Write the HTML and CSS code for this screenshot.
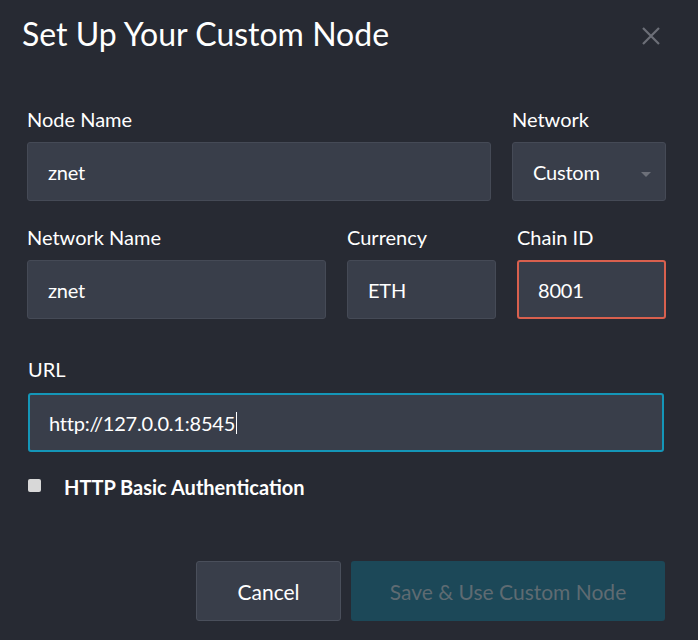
FILE: index.html
```html
<!DOCTYPE html>
<html lang="en">
<head>
<meta charset="utf-8">
<title>Set Up Your Custom Node</title>
<link rel="stylesheet" href="styles.css">
</head>
<body>
<div class="modal">
  <div class="header">
    <h1 class="title">Set Up Your Custom Node</h1>
    <button class="close" aria-label="Close">
      <svg width="20" height="20" viewBox="0 0 20 20"><path d="M2 2 L18 18 M18 2 L2 18" stroke="#6c6f78" stroke-width="2.2" fill="none"/></svg>
    </button>
  </div>
  <div class="row row1">
    <div class="field">
      <label class="label">Node Name</label>
      <div class="input">znet</div>
    </div>
    <div class="field">
      <label class="label">Network</label>
      <div class="input select">Custom<span class="caret"></span></div>
    </div>
  </div>
  <div class="row row2">
    <div class="field">
      <label class="label">Network Name</label>
      <div class="input">znet</div>
    </div>
    <div class="field">
      <label class="label">Currency</label>
      <div class="input">ETH</div>
    </div>
    <div class="field">
      <label class="label">Chain ID</label>
      <div class="input error">8001</div>
    </div>
  </div>
  <div class="field url">
    <label class="label">URL</label>
    <div class="input focus">http://127.0.0.1:8545<span class="cursor"></span></div>
  </div>
  <div class="check">
    <span class="box"></span>
    <span class="check-text">HTTP Basic Authentication</span>
  </div>
  <div class="actions">
    <button class="btn cancel">Cancel</button>
    <button class="btn save">Save &amp; Use Custom Node</button>
  </div>
</div>
</body>
</html>
```
FILE: styles.css
```css
html, body {
  margin: 0;
  padding: 0;
  background: #272a33;
}
body {
  font-family: Lato, "Open Sans", sans-serif;
  color: #ffffff;
  width: 698px;
  height: 640px;
  overflow: hidden;
}
.modal {
  padding: 0 32px 0 27px;
}
.header {
  display: flex;
  justify-content: space-between;
  align-items: flex-start;
  padding-top: 14px;
  margin-left: -5px;
}
.title {
  margin: 0;
  font-weight: 400;
  font-size: 32px;
  line-height: 40px;
  letter-spacing: 0;
  color: #ffffff;
}
.close {
  background: none;
  border: 0;
  padding: 0;
  margin: 12px 5px 0 0;
  width: 20px;
  height: 20px;
  display: block;
}
.close svg { display: block; }
.row {
  display: grid;
  column-gap: 21px;
}
.row1 {
  grid-template-columns: 464px 154px;
  margin-top: 54px;
}
.row2 {
  grid-template-columns: 299px 149px 149px;
  margin-top: 25px;
}
.field {
  display: flex;
  flex-direction: column;
}
.label {
  font-size: 20px;
  line-height: 22px;
  margin-bottom: 12px;
  letter-spacing: 0;
}
.input {
  box-sizing: border-box;
  height: 59px;
  background: #393e4a;
  border: 1px solid #454a56;
  border-radius: 3px;
  padding: 0 20px;
  display: flex;
  align-items: center;
  font-size: 20px;
  letter-spacing: -0.2px;
  color: #ffffff;
}
.select {
  position: relative;
}
.caret {
  position: absolute;
  right: 14px;
  top: 29px;
  width: 0;
  height: 0;
  border-left: 5px solid transparent;
  border-right: 5px solid transparent;
  border-top: 5px solid #6d7079;
}
.error {
  border: 2px solid #d9604e;
  padding-left: 19px;
}
.url {
  margin-top: 39px;
  margin-left: 1px;
  margin-right: 2px;
}
.url .label { margin-bottom: 13px; }
.focus {
  border: 2px solid #1496b8;
  height: 59px;
  padding-left: 19px;
}
.cursor {
  display: inline-block;
  width: 1px;
  height: 22px;
  background: #ffffff;
  margin-left: 1px;
}
.check {
  display: flex;
  align-items: center;
  margin-top: 24px;
  margin-left: 1px;
  height: 22px;
}
.box {
  width: 13px;
  height: 13px;
  background: #d8d8d8;
  border-radius: 2px;
  margin-right: 23px;
  margin-top: -3px;
}
.check-text {
  font-weight: 700;
  font-size: 20px;
  letter-spacing: 0;
}
.actions {
  display: flex;
  justify-content: flex-end;
  gap: 10px;
  margin-top: 63px;
  margin-right: 1px;
}
.btn {
  box-sizing: border-box;
  height: 60px;
  border-radius: 3px;
  font-family: Lato, "Open Sans", sans-serif;
  font-size: 21px;
  letter-spacing: 0;
  cursor: default;
}
.cancel {
  width: 145px;
  background: #393e4a;
  border: 1px solid #4a4f5b;
  color: #ffffff;
}
.save {
  width: 314px;
  background: #1c4858;
  border: 0;
  color: #5f6b72;
}
```
